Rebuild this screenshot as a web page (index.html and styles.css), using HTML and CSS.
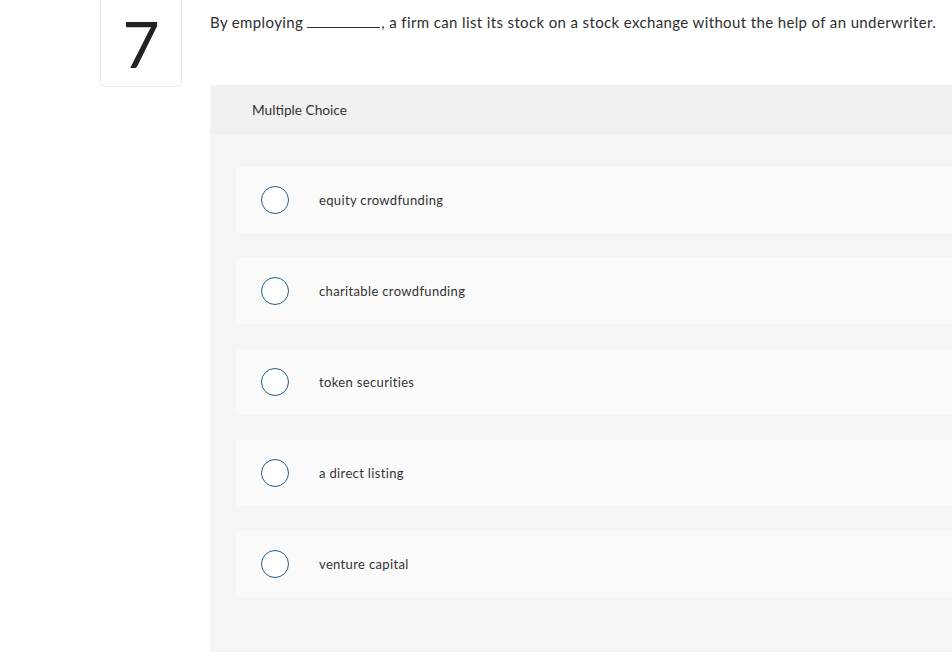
FILE: index.html
```html
<!DOCTYPE html>
<html lang="en">
<head>
<meta charset="utf-8">
<title>Question 7</title>
<link rel="stylesheet" href="styles.css">
</head>
<body>
<div class="page">
  <div class="num-col">
    <div class="num-box">7</div>
  </div>
  <div class="main">
    <p class="question">By employing <span class="blank"></span>, a firm can list its stock on a stock exchange without the help of an underwriter.</p>
    <div class="panel">
      <div class="panel-head">Multiple Choice</div>
      <div class="panel-body">
        <div class="option"><span class="radio"></span><span class="label">equity crowdfunding</span></div>
        <div class="option"><span class="radio"></span><span class="label">charitable crowdfunding</span></div>
        <div class="option"><span class="radio"></span><span class="label">token securities</span></div>
        <div class="option"><span class="radio"></span><span class="label">a direct listing</span></div>
        <div class="option"><span class="radio"></span><span class="label">venture capital</span></div>
      </div>
    </div>
  </div>
</div>
</body>
</html>
```
FILE: styles.css
```css
html, body {
  margin: 0;
  padding: 0;
  background: #ffffff;
  font-family: Lato, "Open Sans", "Liberation Sans", sans-serif;
  color: #333333;
  overflow: hidden;
}

.page {
  display: flex;
  align-items: flex-start;
  height: 672px;
}

.num-col {
  padding-left: 100px;
  flex: none;
}

.num-box {
  box-sizing: border-box;
  width: 82px;
  height: 93px;
  margin-top: -6px;
  border: 1px solid #e8e8e8;
  border-radius: 5px;
  display: flex;
  align-items: center;
  justify-content: center;
  padding-top: 6px;
  font-size: 64px;
  line-height: 1;
  color: #222222;
  font-family: Lato, "Liberation Sans", sans-serif;
}

.main {
  flex: 1;
  margin-left: 28px;
  min-width: 0;
}

.question {
  margin: 0;
  padding-top: 12px;
  height: 85px;
  box-sizing: border-box;
  font-size: 15px;
  line-height: 20px;
  color: #2e2e2e;
  white-space: nowrap;
  letter-spacing: 0.37px;
}

.blank {
  display: inline-block;
  width: 73px;
  border-bottom: 1px solid #333333;
  height: 14px;
  vertical-align: baseline;
  margin-right: 1px;
}

.panel {
  background: #f5f5f5;
  border-radius: 4px 0 0 4px;
  overflow: hidden;
}

.panel-head {
  height: 50px;
  line-height: 50px;
  background: #f0f0f0;
  padding-left: 42px;
  font-size: 13.7px;
  color: #333333;
}

.panel-body {
  padding: 32px 0 55px 26px;
  display: flex;
  flex-direction: column;
  gap: 25px;
}

.option {
  height: 66px;
  background: #fafafa;
  border-radius: 3px 0 0 3px;
  display: flex;
  align-items: center;
  padding-left: 25px;
}

.radio {
  box-sizing: border-box;
  width: 28px;
  height: 28px;
  border: 1.7px solid #255a8c;
  border-radius: 50%;
  background: #ffffff;
  flex: none;
}

.label {
  margin-left: 30px;
  font-size: 13px;
  letter-spacing: 0.35px;
  color: #333333;
}
```
